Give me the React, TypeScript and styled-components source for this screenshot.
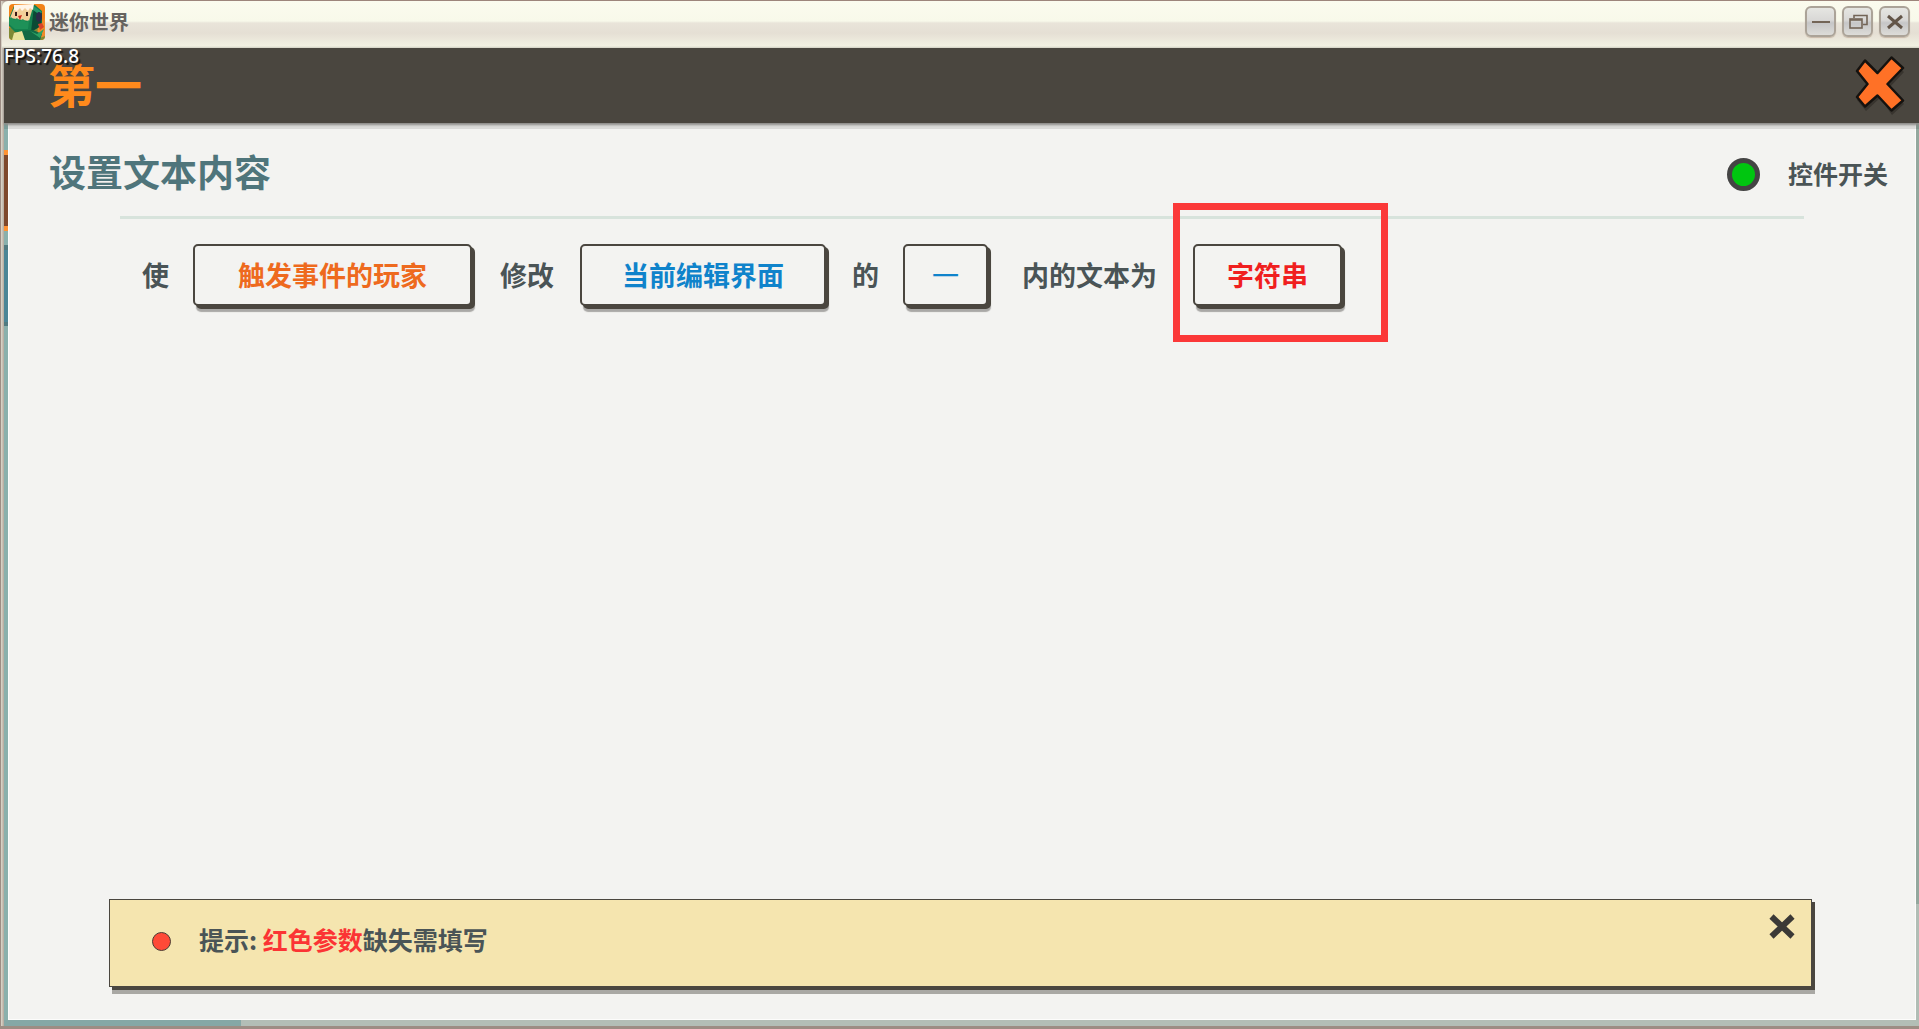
import React from "react";
import styled, { createGlobalStyle } from "styled-components";

const GlobalStyle = createGlobalStyle`
  * { box-sizing: border-box; }
  body { margin: 0; font-family: "Noto Sans", "Noto Sans CJK SC", sans-serif; }
  button { font: inherit; cursor: pointer; }
`;

const Window = styled.div`
  min-height: 100vh;
  display: flex;
  flex-direction: column;
  background: linear-gradient(90deg, #9d8d84 0, #9d8d84 1px, #ddd8cc 1px, #b3a79c 4px);
  border-top: 1px solid #9d857b;
  border-bottom: 3px solid #9d8d84;
`;

const TitleBar = styled.header`
  display: flex;
  align-items: center;
  height: 47px;
  margin-left: 2px;
  padding: 0 9px 6px 7px;
  border-radius: 6px 0 0 0;
  background: linear-gradient(#fbfbee 0, #f8f9ea 20px, #e9e4d9 22px, #e5dfd4 32px, #f2f1e2 45px, #d0d0c2 47px);
`;

const WindowTitle = styled.h1`
  flex: 1;
  margin: 0 0 0 4px;
  padding-top: 1px;
  font: 700 20px/28px "Noto Sans CJK SC", sans-serif;
  color: #66635f;
`;

const WindowControls = styled.div`
  display: flex;
  gap: 6px;
`;

const WindowButton = styled.button`
  display: grid;
  place-items: center;
  width: 31px;
  height: 31px;
  padding: 0;
  border: 2px solid #aba398;
  border-radius: 6px;
  background: linear-gradient(#e6e6e2 0, #d9d8d6 45%, #c6c6c7 55%, #dddcd8 100%);
  box-shadow: 0 1px 1px #c9b9a8;
  svg { display: block; }
`;

const Client = styled.div`
  flex: 1;
  display: flex;
  flex-direction: column;
  margin-left: 4px;
`;

const TopBar = styled.div`
  position: relative;
  z-index: 1;
  display: flex;
  align-items: center;
  justify-content: space-between;
  height: 75px;
  padding: 0 13px 0 44px;
  background: #4a463f;
  box-shadow: 0 2px 2px #8d8c89, 0 6px 0 rgba(0, 0, 0, 0.1);
`;

const Fps = styled.span`
  position: absolute;
  left: 0;
  top: -4px;
  font: 500 19px/24px "Noto Sans", sans-serif;
  color: #fff;
  text-shadow: 2px 2px 1px #111;
`;

const ScreenTitle = styled.h2`
  margin: 0;
  padding-bottom: 5px;
  font: 700 47px/60px "Noto Sans CJK SC", sans-serif;
  color: #ff8a1c;
`;

const PlainButton = styled.button`
  display: block;
  padding: 0;
  border: 0;
  background: none;
  svg { display: block; }
`;

const Stage = styled.div`
  flex: 1;
  display: flex;
`;

const LeftStrip = styled.div`
  width: 4px;
  background: linear-gradient(
    #8ab0ac 0, #8ab0ac 27px,
    #ff9334 27px, #ff9334 32px,
    #7e482c 32px, #7e482c 103px,
    #ff9334 103px, #ff9334 108px,
    #8ab0ac 108px, #8ab0ac 122px,
    #517a80 122px, #517a80 127px,
    #4b8596 127px, #4b8596 199px,
    #517a80 199px, #517a80 203px,
    #8ab0ac 203px
  );
`;

const RightStrip = styled.div`
  width: 3px;
  background: linear-gradient(#93a79d calc(100% - 116px), #b1bdb5 calc(100% - 116px));
`;

const BottomStrip = styled.div`
  height: 6px;
  background: linear-gradient(90deg, #85a8a6 237px, #b3beb6 237px);
`;

const Panel = styled.main`
  flex: 1;
  display: flex;
  flex-direction: column;
  padding-bottom: 32px;
  background: #f3f3f1;
  border: solid #fcfcfb;
  border-width: 0 1px 1px 1px;
`;

const PanelHead = styled.div`
  display: flex;
  align-items: center;
  height: 93px;
  padding: 9px 27px 0 40px;
`;

const PanelTitle = styled.h3`
  flex: 1;
  margin: 0;
  padding-bottom: 6px;
  font: 700 37px/48px "Noto Sans CJK SC", sans-serif;
  color: #4f757b;
`;

const SwitchButton = styled.button`
  display: flex;
  align-items: center;
  gap: 28px;
  padding: 0;
  border: 0;
  background: none;
`;

const SwitchLabel = styled.span`
  padding-bottom: 3px;
  font: 700 25px/36px "Noto Sans CJK SC", sans-serif;
  color: #4a5456;
`;

const Lamp = styled.span`
  width: 33px;
  height: 33px;
  border: 5px solid #444444;
  border-radius: 50%;
  background: #00c610;
`;

const Divider = styled.hr`
  width: auto;
  height: 3px;
  margin: 0 111px;
  border: 0;
  background: #d7e3dc;
`;

const Sentence = styled.div`
  flex: 1;
  display: flex;
  align-items: flex-start;
  padding: 25px 24px 0 109px;
`;

const Word = styled.span<{ $before?: number; $after: number }>`
  padding: 0 ${(p) => p.$after}px 0 ${(p) => p.$before ?? p.$after}px;
  font: 700 27px/62px "Noto Sans CJK SC", sans-serif;
  color: #4a5456;
  white-space: nowrap;
`;

const Param = styled.button<{ $color: string; $pad: number; $light?: boolean }>`
  height: 62px;
  padding: 0 ${(p) => p.$pad}px;
  border: 2px solid #4a463f;
  border-radius: 5px;
  background: #f3f3f1;
  box-shadow: 3px 3px 0 #4a463f, 3px 6px 1px #a9a8a6;
  font: ${(p) => (p.$light ? 400 : 700)} 27px/58px "Noto Sans CJK SC", sans-serif;
  color: ${(p) => p.$color};
  white-space: nowrap;
`;

const Highlighted = styled.div`
  position: relative;
`;

const HighlightFrame = styled.div`
  position: absolute;
  inset: -41px -46px -36px -20px;
  border: 7px solid #fb3838;
  pointer-events: none;
`;

const Hint = styled.aside`
  display: flex;
  align-items: flex-start;
  height: 88px;
  margin: 0 103px 0 100px;
  padding: 13px 15px 0 42px;
  border: 1px solid #4a463f;
  background: #f5e5af;
  box-shadow: 3px 3px 0 #4a463f, 3px 7px 0 #a9a8a4;
`;

const HintDot = styled.span`
  width: 19px;
  height: 19px;
  margin: 19px 28px 0 0;
  border: 1px solid #4a3a33;
  border-radius: 50%;
  background: #ff4a37;
`;

const HintText = styled.p`
  flex: 1;
  margin: 0;
  padding-top: 8px;
  font: 700 25px/36px "Noto Sans CJK SC", sans-serif;
  color: #4a5456;
`;

const Missing = styled.em`
  font-style: normal;
  color: #fb3434;
`;

const AppLogo = () => (
  <svg width="36" height="36" viewBox="0 0 36 36" aria-hidden="true">
    <defs>
      <clipPath id="logo"><rect width="36" height="36" rx="4" /></clipPath>
    </defs>
    <g clipPath="url(#logo)">
      <rect width="36" height="36" fill="#f28318" />
      <path d="M0 24l10-2 26 2v12H0z" fill="#7f8a35" />
      <path d="M29 22l7-8v18l-8 3z" fill="#ef8a2a" />
      <path d="M5 2L26 1l7 6 0 14-11 7-16 0-6-6V14z" fill="#14804d" />
      <path d="M25 2l8 6-1 14-10 6z" fill="#0b4a35" />
      <path d="M25 2l8 6-2 3-7-5z" fill="#25996a" />
      <path d="M5 4l19-1-4 14L1 14z" fill="#f3cf9a" />
      <path d="M5 1l20-1-1 6-3-2-2 3-3-3-3 3-2-3-3 3-3-1z" fill="#fff5e8" />
      <path d="M0 15l2-2 3 3 3-2 3 3 3-2 3 3 3-2-1 9-13 0-6-5z" fill="#1e9158" />
      <path d="M6 8h2v4H6zM17 8h2v4h-2z" fill="#3b1a14" />
      <path d="M9 12l4-1-2 5z" fill="#d02b1b" />
      <ellipse cx="30" cy="13" rx="3" ry="5" fill="#2b2b48" />
      <path d="M11 27l13-1 9 4-2 6H11z" fill="#126944" />
      <path d="M5 29l8-2 3 9H3z" fill="#e9e29a" />
      <path d="M29 20l4-1 2 4-4 3z" fill="#d8432a" />
      <path d="M21 27l7 3 7-5-4 9z" fill="#2ba163" />
    </g>
  </svg>
);

const params = {
  player: "#ee6a1e",
  ui: "#0f83cb",
  missing: "#f01f1f",
};

export default function App() {
  return (
    <Window>
      <GlobalStyle />
      <TitleBar>
        <AppLogo />
        <WindowTitle>迷你世界</WindowTitle>
        <WindowControls>
          <WindowButton aria-label="最小化">
            <svg width="24" height="24" viewBox="0 0 24 24" fill="none" stroke="#736557" strokeWidth="2">
              <path d="M3 12h18" />
            </svg>
          </WindowButton>
          <WindowButton aria-label="还原">
            <svg width="24" height="24" viewBox="0 0 24 24" fill="none" stroke="#736557" strokeWidth="1.6">
              <path d="M8 8V5.500h13v9h-4" />
              <rect x="4" y="9" width="12" height="9" />
              <path d="M4 10h12" />
            </svg>
          </WindowButton>
          <WindowButton aria-label="关闭窗口">
            <svg width="24" height="24" viewBox="0 0 24 24" fill="none" stroke="#635548" strokeWidth="3">
              <path d="M5 6l14 12M19 6L5 18" />
            </svg>
          </WindowButton>
        </WindowControls>
      </TitleBar>
      <Client>
        <TopBar>
          <Fps>FPS:76.8</Fps>
          <ScreenTitle>第一</ScreenTitle>
          <PlainButton aria-label="关闭">
            <svg width="52" height="60" viewBox="0 0 52 60">
              <path d="M12 7L26 22 38 5 50 16 36 31 50 48 38 59 26 42 12 55 3 44 15 31 3 16z" fill="#25211d" opacity=".5" />
              <path
                d="M11 4.500L23.500 17 37.500 1.500 49 12 33.500 28 49 44.500 37.500 54.500 23.500 39.500 11 50.500 3 41 13.500 28 3 15z"
                fill="#ff7126"
                stroke="#15120f"
                strokeWidth="2.500"
                strokeLinejoin="round"
              />
            </svg>
          </PlainButton>
        </TopBar>
        <Stage>
          <LeftStrip />
          <Panel>
            <PanelHead>
              <PanelTitle>设置文本内容</PanelTitle>
              <SwitchButton role="switch" aria-checked="true">
                <Lamp />
                <SwitchLabel>控件开关</SwitchLabel>
              </SwitchButton>
            </PanelHead>
            <Divider />
            <Sentence>
              <Word $after={24}>使</Word>
              <Param $color={params.player} $pad={43}>触发事件的玩家</Param>
              <Word $before={28} $after={26}>修改</Word>
              <Param $color={params.ui} $pad={40}>当前编辑界面</Param>
              <Word $before={26} $after={24}>的</Word>
              <Param $color={params.ui} $pad={27} $light>一</Param>
              <Word $before={34} $after={36}>内的文本为</Word>
              <Highlighted>
                <Param $color={params.missing} $pad={32}>字符串</Param>
                <HighlightFrame />
              </Highlighted>
            </Sentence>
            <Hint>
              <HintDot />
              <HintText>
                提示: <Missing>红色参数</Missing>缺失需填写
              </HintText>
              <PlainButton aria-label="关闭提示">
                <svg width="28" height="28" viewBox="0 0 28 28" fill="none" stroke="#3b3936" strokeWidth="6">
                  <path d="M3.500 3.500l21 20M24.500 3.500l-21 20" />
                </svg>
              </PlainButton>
            </Hint>
          </Panel>
          <RightStrip />
        </Stage>
        <BottomStrip />
      </Client>
    </Window>
  );
}
